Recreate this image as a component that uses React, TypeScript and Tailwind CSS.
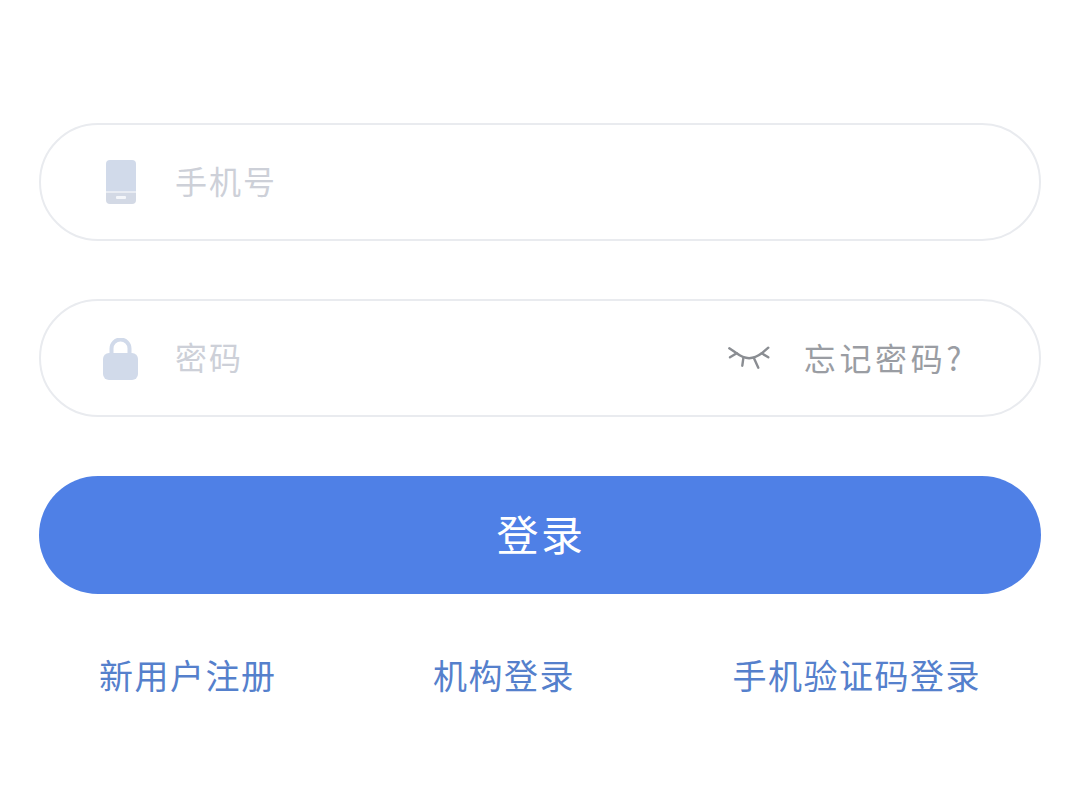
import React from 'react';

const cjk = "font-['PingFang_SC','Noto_Sans_CJK_SC',sans-serif]";

const PhoneIcon = () => (
  <svg width="30" height="44" viewBox="0 0 30 44" className="shrink-0">
    <path d="M4 0h22a4 4 0 0 1 4 4v27.500H0V4a4 4 0 0 1 4-4z" fill="#d1daea" />
    <path d="M0 32.500h30v7.500a4 4 0 0 1-4 4H4a4 4 0 0 1-4-4z" fill="#d3d9e5" />
    <rect x="10" y="36" width="10" height="3" rx="1" fill="#f4f6fa" />
  </svg>
);

const LockIcon = () => (
  <svg width="35" height="42" viewBox="0 0 35 42" className="shrink-0">
    <path d="M8.500 17V10.500a9 9 0 0 1 18 0V17" fill="none" stroke="#d1daea" strokeWidth="4" />
    <rect x="0" y="15" width="35" height="27" rx="6" fill="#d1daea" />
  </svg>
);

const EyeClosedIcon = () => (
  <svg width="44" height="26" viewBox="0 0 44 26" fill="none" stroke="#8a8d92" strokeWidth="2.400" strokeLinecap="round" strokeLinejoin="round" className="mt-[2px] shrink-0">
    <path d="M8.700 7.300Q21 17 33.700 7.300" />
    <path d="M1.300 2.300L8.700 7.300L2 11.300" />
    <path d="M40.300 1.700L33.700 7.300L40.300 11.300" />
    <path d="M15.300 12.300L14.300 19.700" />
    <path d="M26 12.300L30.300 21.700" />
  </svg>
);

const Field = ({ children }: { children: React.ReactNode }) => (
  <div className="flex h-[118px] items-center rounded-full border-2 border-[#e9ebef] bg-white">
    {children}
  </div>
);

export default function App() {
  return (
    <div className={`${cjk} h-[794px] w-[1080px] overflow-hidden bg-white px-[39px] pt-[123px]`}>
      <Field>
        <div className="ml-[65px] flex w-[69px]">
          <PhoneIcon />
        </div>
        <span className="pb-[4px] text-[32px] tracking-[2px] text-[#cdd0d8]">手机号</span>
      </Field>

      <div className="mt-[58px]">
        <Field>
          <div className="ml-[62px] flex w-[72px] pt-[2px]">
            <LockIcon />
          </div>
          <span className="pb-[4px] text-[32px] tracking-[2px] text-[#cdd0d8]">密码</span>
          <div className="ml-auto mr-[74px] flex items-center">
            <EyeClosedIcon />
            <span className="ml-[32px] pb-[3px] text-[32px] tracking-[3.600px] text-[#9a9da3]">忘记密码?</span>
          </div>
        </Field>
      </div>

      <button className="mt-[59px] flex h-[118px] w-full items-center justify-center rounded-full bg-[#4f80e6] pb-[6px] pl-[2px] text-[42px] tracking-[2.500px] text-white">
        登录
      </button>

      <div className="mt-[58px] flex justify-between px-[60px] text-[34px] leading-[46px] tracking-[1.500px] text-[#5580cc]">
        <span>新用户注册</span>
        <span className="ml-[-1px]">机构登录</span>
        <span>手机验证码登录</span>
      </div>
    </div>
  );
}
